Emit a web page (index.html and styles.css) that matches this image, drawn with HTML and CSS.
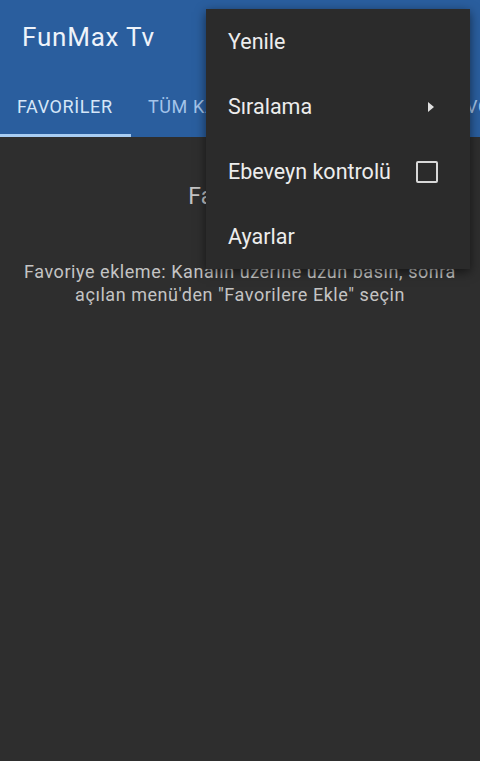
FILE: index.html
```html
<!DOCTYPE html>
<html lang="tr">
<head>
  <meta charset="UTF-8">
  <title>FunMax Tv</title>
  <link rel="stylesheet" href="styles.css">
</head>
<body>
  <div class="app">
    <header class="appbar">
      <div class="toolbar">
        <h1 class="title">FunMax Tv</h1>
      </div>
      <nav class="tabs">
        <div class="tab active">FAVORİLER</div>
        <div class="tab wide">TÜM KANALLAR</div>
        <div class="tab">VOD</div>
      </nav>
    </header>

    <main class="content">
      <div class="empty-title">Favori yok</div>
      <p class="empty-hint">Favoriye ekleme: Kanalın üzerine uzun basın, sonra açılan menü'den "Favorilere Ekle" seçin</p>
    </main>

    <div class="menu">
      <div class="menu-item">Yenile</div>
      <div class="menu-item">Sıralama <span class="arrow"></span></div>
      <div class="menu-item">Ebeveyn kontrolü <span class="checkbox"></span></div>
      <div class="menu-item">Ayarlar</div>
    </div>
  </div>
</body>
</html>
```

FILE: styles.css
```css
html, body {
  margin: 0;
  height: 100%;
}
body {
  font-family: Roboto, "Noto Sans", sans-serif;
  background-color: #2e2e2e;
  overflow: hidden;
}
.app {
  position: relative;
  height: 100%;
}
.appbar {
  background-color: #2a5e9e;
}
.toolbar {
  height: 75px;
  display: flex;
  align-items: center;
  padding-left: 22px;
}
.title {
  margin: 0;
  font-size: 26px;
  font-weight: 400;
  letter-spacing: 0.8px;
  color: #eef3fa;
  padding-bottom: 2px;
}
.tabs {
  display: flex;
  height: 62px;
  white-space: nowrap;
  overflow: hidden;
}
.tab {
  display: flex;
  align-items: center;
  flex: 0 0 auto;
  padding: 0 17px;
  font-size: 18px;
  letter-spacing: 0.6px;
  color: #a3c4ea;
  box-sizing: border-box;
  border-bottom: 3px solid transparent;
  padding-top: 3px;
}
.tab.active {
  width: 131px;
  color: #d5e6f8;
  border-bottom-color: #a8cdf3;
}
.tab.wide {
  width: 318px;
}
.content {
  text-align: center;
  padding: 46px 10px 0;
}
.empty-title {
  font-size: 23px;
  color: #c4c4c4;
}
.empty-hint {
  margin: 50px 0 0;
  font-size: 18px;
  line-height: 23px;
  letter-spacing: 0.55px;
  color: #c4c4c4;
}
.menu {
  position: absolute;
  top: 9px;
  left: 206px;
  width: 264px;
  background-color: #2b2b2b;
  box-shadow: 0 3px 10px rgba(0, 0, 0, 0.55);
}
.menu-item {
  height: 65px;
  display: flex;
  align-items: center;
  justify-content: space-between;
  padding: 0 32px 0 22px;
  font-size: 21.5px;
  color: #ededed;
}
.arrow {
  width: 0;
  height: 0;
  border-top: 5px solid transparent;
  border-bottom: 5px solid transparent;
  border-left: 6px solid #e0e0e0;
  margin-right: 4px;
}
.checkbox {
  width: 18px;
  height: 18px;
  border: 2px solid #d8d8d8;
  border-radius: 2px;
}
```
